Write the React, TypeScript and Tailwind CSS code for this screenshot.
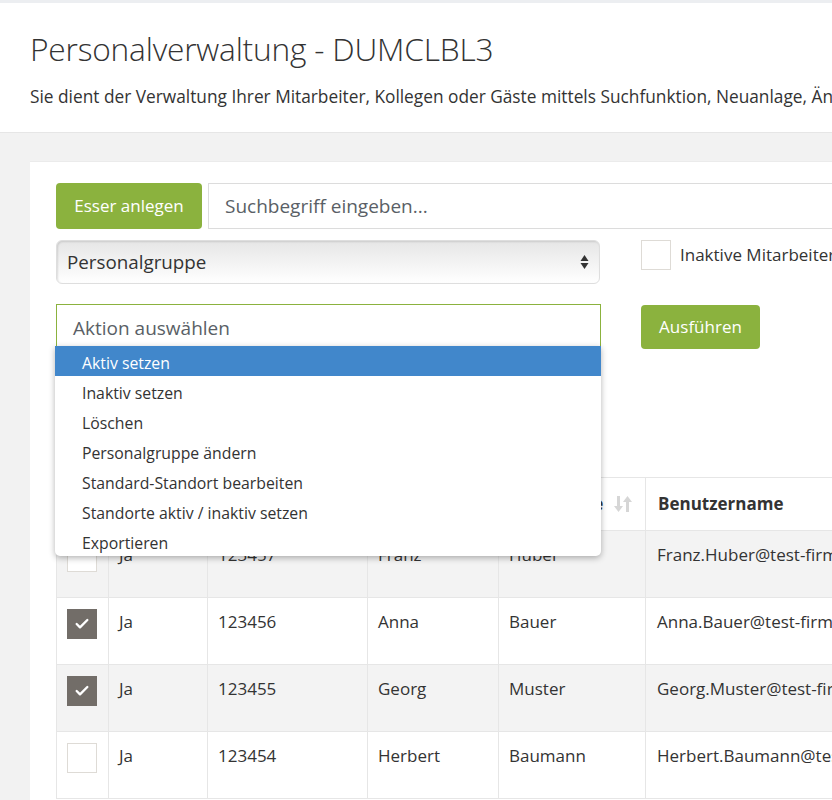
import { Check } from "lucide-react"

const actions = [
  "Aktiv setzen",
  "Inaktiv setzen",
  "Löschen",
  "Personalgruppe ändern",
  "Standard-Standort bearbeiten",
  "Standorte aktiv / inaktiv setzen",
  "Exportieren",
]

const rows = [
  { checked: false, aktiv: "Ja", nr: "123457", vorname: "Franz", nachname: "Huber", user: "Franz.Huber@test-firma.de" },
  { checked: true, aktiv: "Ja", nr: "123456", vorname: "Anna", nachname: "Bauer", user: "Anna.Bauer@test-firma.de" },
  { checked: true, aktiv: "Ja", nr: "123455", vorname: "Georg", nachname: "Muster", user: "Georg.Muster@test-firma.de" },
  { checked: false, aktiv: "Ja", nr: "123454", vorname: "Herbert", nachname: "Baumann", user: "Herbert.Baumann@test-firma.de" },
]

function SortIcon() {
  return (
    <svg width="18" height="18" viewBox="0 0 18 18" className="shrink-0 text-[#d6d6d6]" fill="currentColor">
      <rect x="3" y="1" width="3" height="11" />
      <polygon points="0,11 9,11 4.5,17" />
      <rect x="12" y="6" width="3" height="11" />
      <polygon points="9,7 18,7 13.5,1" />
    </svg>
  )
}

function Box({ checked }: { checked: boolean }) {
  if (checked) {
    return (
      <div className="flex h-[30px] w-[30px] items-center justify-center bg-[#726d68]">
        <Check className="h-4 w-4 text-white" strokeWidth={3.5} />
      </div>
    )
  }
  return <div className="h-[30px] w-[30px] border border-[#dedbd6] bg-white" />
}

export default function App() {
  return (
    <div className="min-h-screen w-[832px] overflow-hidden bg-[#f2f2f2] font-['Open_Sans',sans-serif] text-[#333]">
      <header className="h-[133px] w-[1400px] border-t-[3px] border-b border-t-[#eceef1] border-b-[#e6e6e6] bg-white pl-[30px] pt-[26px]">
        <h1 className="text-[31.7px] leading-[40px] font-light tracking-[-0.2px] text-[#333]">Personalverwaltung - DUMCLBL3</h1>
        <p className="mt-[17px] text-[17.3px] leading-[22px] whitespace-nowrap">
          Sie dient der Verwaltung Ihrer Mitarbeiter, Kollegen oder Gäste mittels Suchfunktion, Neuanlage, Änderung und Löschung.
        </p>
      </header>

      <div className="pl-[30px] pt-[28px]">
        <div className="w-[1400px] border-t border-[#ebebeb] bg-white pt-[21px] pl-[26px] pb-10">
          <div className="flex gap-[6px]">
            <button className="h-[46px] w-[146px] rounded-[4px] bg-[#8bb23e] text-[17px] text-white">Esser anlegen</button>
            <div className="flex h-[46px] w-[900px] items-center border border-[#dcdcdc] px-4 text-[19px] text-[#5a5f66]">
              Suchbegriff eingeben...
            </div>
          </div>

          <div className="mt-[11px] flex items-start">
            <div className="flex h-[44px] w-[544px] items-center justify-between rounded-[6px] border border-[#dedede] bg-gradient-to-b from-[#e6e6e6] to-white pl-[10px] pr-[10px] text-[18.8px] text-[#333] shadow-[inset_1px_1px_2px_rgba(0,0,0,0.12)]">
              <span>Personalgruppe</span>
              <svg width="9" height="16" viewBox="0 0 9 16" fill="#333">
                <polygon points="4.5,1 8.5,7 0.5,7" />
                <polygon points="0.5,9 8.5,9 4.5,15" />
              </svg>
            </div>
            <div className="ml-[41px] flex items-center gap-[9px]">
              <div className="h-[30px] w-[30px] border border-[#dedbd6] bg-white" />
              <span className="text-[17px] whitespace-nowrap">Inaktive Mitarbeiter anzeigen</span>
            </div>
          </div>

          <div className="relative mt-[20px] flex items-start">
            <div className="flex h-[43px] w-[545px] items-center border border-[#8bb23e] pt-[5px] pl-[16px] text-[19px] text-[#5a5f66]">
              Aktion auswählen
            </div>
            <button className="mt-[1px] ml-[40px] h-[44px] w-[119px] rounded-[4px] bg-[#8bb23e] text-[17px] text-white">Ausführen</button>

            <ul className="absolute top-[42px] left-[-1px] z-10 w-[546px] overflow-hidden rounded-b-[5px] bg-white shadow-[0_2px_6px_rgba(0,0,0,0.3)]">
              {actions.map((a, i) => (
                <li
                  key={a}
                  className={
                    i === 0
                      ? "flex h-[30px] items-center bg-[#4187cb] pt-[5px] pl-[27px] text-[15.8px] text-white"
                      : "flex h-[30px] items-center pt-[5px] pl-[27px] text-[15.8px] text-[#333]"
                  }
                >
                  {a}
                </li>
              ))}
            </ul>
          </div>

          <table className="mt-[128px] w-[909px] table-fixed border-collapse text-[17px]">
            <colgroup>
              <col className="w-[52px]" />
              <col className="w-[99px]" />
              <col className="w-[160px]" />
              <col className="w-[131px]" />
              <col className="w-[147px]" />
              <col className="w-[320px]" />
            </colgroup>
            <thead>
              <tr className="h-[53px]">
                <th className="border border-[#e6e6e6]" />
                {["Aktiv", "Personalnummer", "Vorname", "Nachname"].map((h) => (
                  <th key={h} className="overflow-hidden border border-[#e6e6e6] pr-[13px] pl-3 text-left font-bold whitespace-nowrap">
                    <div className="flex items-center justify-between gap-1">
                      <span>{h}</span>
                      <SortIcon />
                    </div>
                  </th>
                ))}
                <th className="border border-[#e6e6e6] px-3 text-left font-bold">Benutzername</th>
              </tr>
            </thead>
            <tbody>
              {rows.map((r, i) => (
                <tr key={r.nr} className={i % 2 === 0 ? "h-[67px] bg-[#f3f3f3]" : "h-[67px] bg-white"}>
                  <td className="border border-[#e6e6e6] pt-[11px] pl-[10px] align-top">
                    <Box checked={r.checked} />
                  </td>
                  <td className="border border-[#e6e6e6] px-[10px] pt-[11px] align-top">{r.aktiv}</td>
                  <td className="border border-[#e6e6e6] px-[10px] pt-[11px] align-top">{r.nr}</td>
                  <td className="border border-[#e6e6e6] px-[10px] pt-[11px] align-top">{r.vorname}</td>
                  <td className="border border-[#e6e6e6] px-[10px] pt-[11px] align-top">{r.nachname}</td>
                  <td className="border border-[#e6e6e6] px-[11px] pt-[11px] align-top whitespace-nowrap">{r.user}</td>
                </tr>
              ))}
            </tbody>
          </table>
        </div>
      </div>
    </div>
  )
}
